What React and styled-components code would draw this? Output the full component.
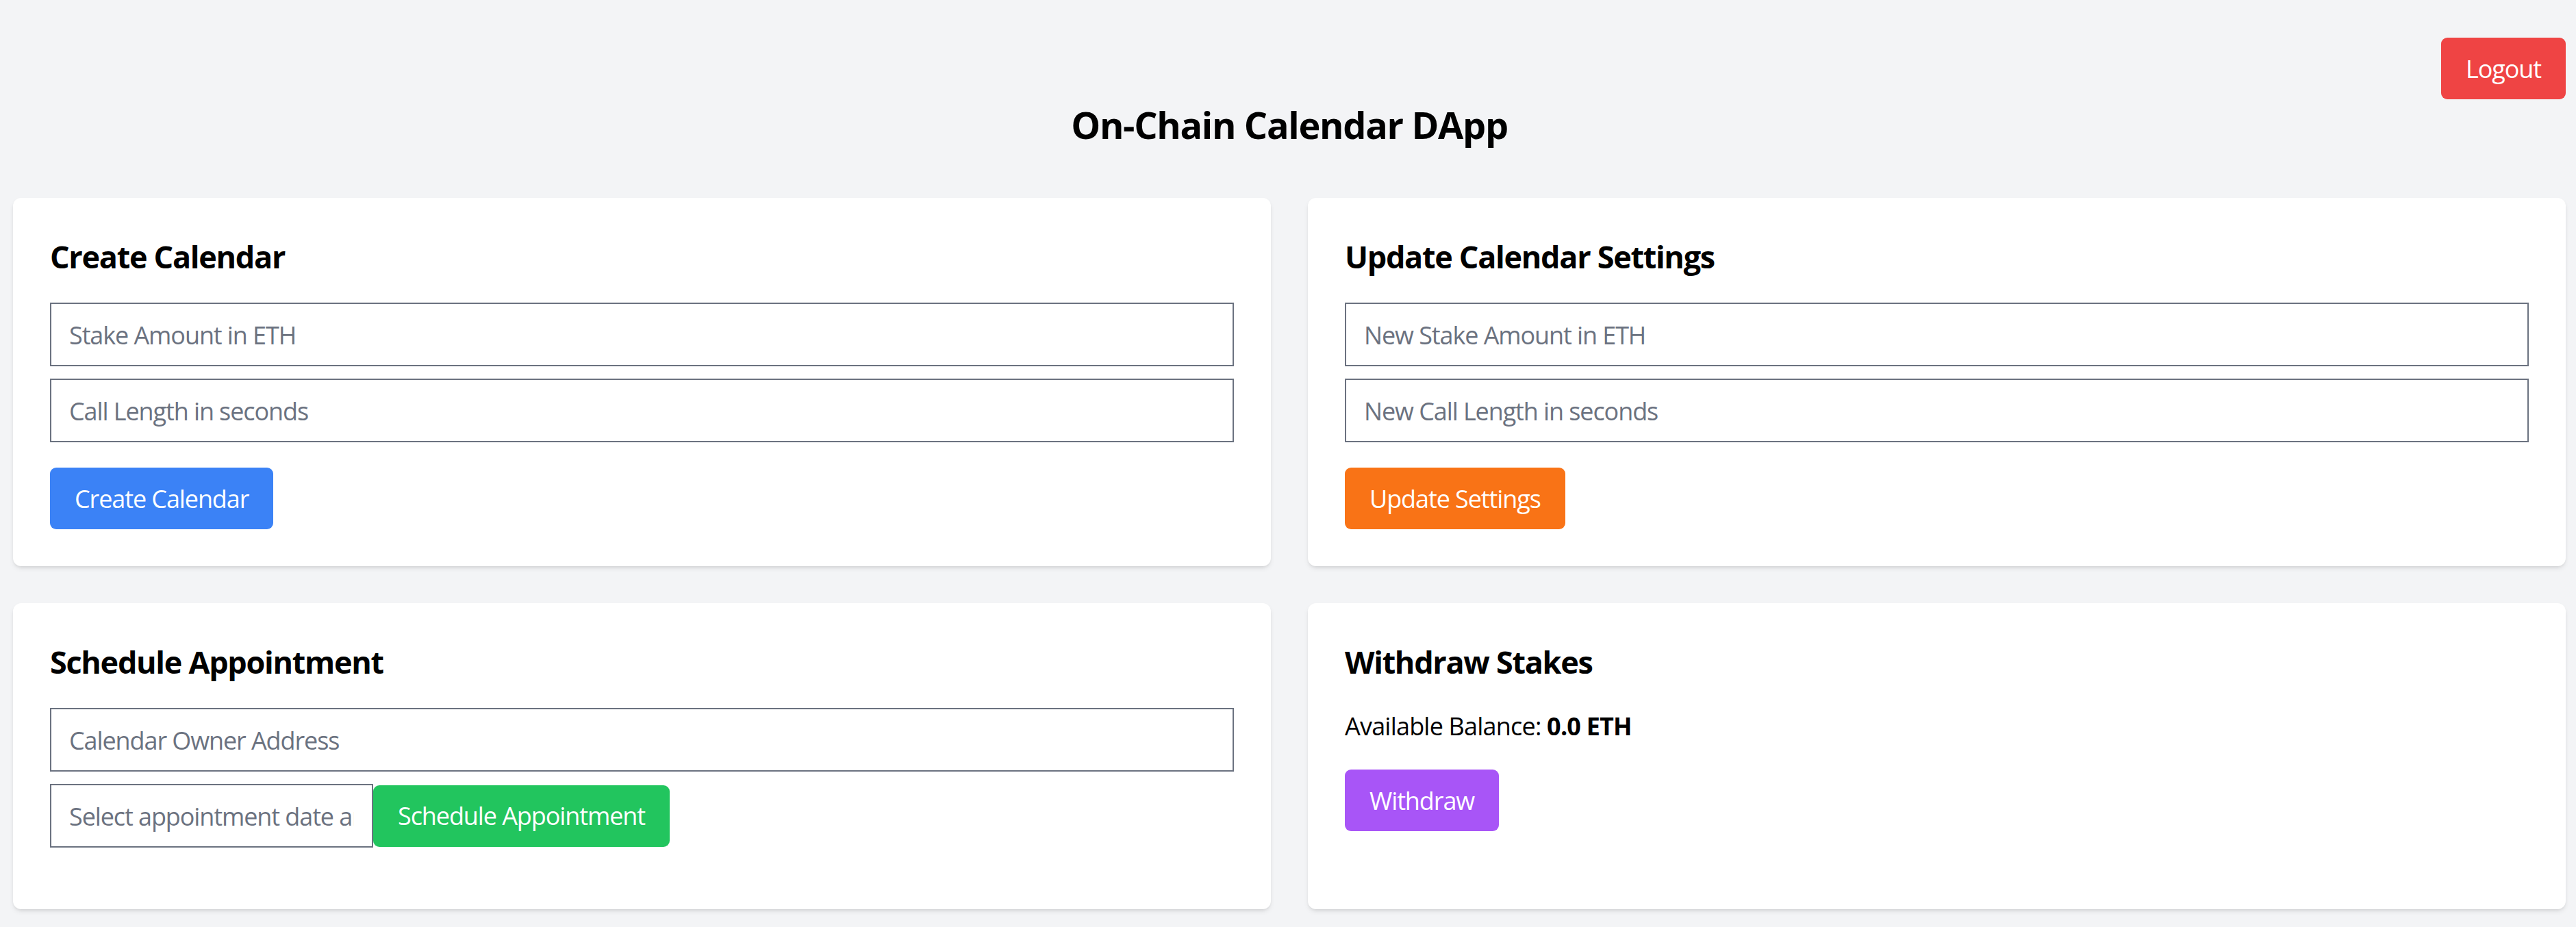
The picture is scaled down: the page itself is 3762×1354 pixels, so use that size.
import React, { useState } from "react";
import styled, { createGlobalStyle } from "styled-components";

const GlobalStyle = createGlobalStyle`
  * { box-sizing: border-box; }
  html, body {
    margin: 0;
    padding: 0;
    background: #f3f4f6;
  }
  body {
    font-family: "Open Sans", "Noto Sans", "Liberation Sans", sans-serif;
    font-size: 36px;
    line-height: 54px;
    color: #000;
  }
`;

const Page = styled.div`
  min-height: 1354px;
  padding: 55px 15px 40px 19px;
  background: #f3f4f6;
`;

const TopBar = styled.div`
  display: flex;
  justify-content: flex-end;
`;

const Title = styled.h1`
  margin: 1px 0 71px;
  text-align: center;
  font-size: 54px;
  line-height: 72px;
  font-weight: 700;
  letter-spacing: -1.3px;
`;

const Grid = styled.div`
  display: grid;
  grid-template-columns: 1fr 1fr;
  gap: 54px;
`;

const Card = styled.section`
  background: #fff;
  border-radius: 12px;
  padding: 54px;
  box-shadow: 0 4px 7px -1px rgba(0, 0, 0, 0.1), 0 2px 4px -2px rgba(0, 0, 0, 0.1);
`;

const CardTitle = styled.h2`
  margin: 0 0 36px;
  font-size: 45px;
  line-height: 63px;
  font-weight: 700;
  letter-spacing: -1.3px;
`;

const Input = styled.input`
  display: block;
  width: ${(p) => p.$width || "100%"};
  height: 93px;
  margin-bottom: ${(p) => (p.$last ? "0" : "18px")};
  padding: 2px 26px 0;
  border: 2px solid #6b7280;
  border-radius: 0;
  background: #fff;
  font-family: inherit;
  font-size: 36px;
  letter-spacing: -1.1px;
  color: #111827;
  outline: none;

  &::placeholder {
    color: #6b7280;
  }
`;

const Button = styled.button`
  height: 90px;
  margin-top: ${(p) => p.$mt || "0"};
  padding: 0 36px;
  border: none;
  border-radius: 9px;
  background: ${(p) => p.$bg};
  color: #fff;
  font-family: inherit;
  font-size: 36px;
  letter-spacing: -1.1px;
  cursor: pointer;
`;

const InlineRow = styled.div`
  display: flex;
  align-items: center;
  margin-bottom: 36px;
`;

const Balance = styled.p`
  margin: 0;
  font-size: 36px;
  line-height: 54px;
  letter-spacing: -0.8px;

  strong {
    font-weight: 700;
  }
`;

export default function App() {
  const [stake, setStake] = useState("");
  const [callLength, setCallLength] = useState("");
  const [newStake, setNewStake] = useState("");
  const [newCallLength, setNewCallLength] = useState("");
  const [owner, setOwner] = useState("");
  const [date, setDate] = useState("");

  return (
    <>
      <GlobalStyle />
      <Page>
        <TopBar>
          <Button $bg="#ef4444">Logout</Button>
        </TopBar>
        <Title>On-Chain Calendar DApp</Title>

        <Grid>
          <Card>
            <CardTitle>Create Calendar</CardTitle>
            <Input
              placeholder="Stake Amount in ETH"
              value={stake}
              onChange={(e) => setStake(e.target.value)}
            />
            <Input
              $last
              placeholder="Call Length in seconds"
              value={callLength}
              onChange={(e) => setCallLength(e.target.value)}
            />
            <Button $bg="#3b82f6" $mt="37px">
              Create Calendar
            </Button>
          </Card>

          <Card>
            <CardTitle>Update Calendar Settings</CardTitle>
            <Input
              placeholder="New Stake Amount in ETH"
              value={newStake}
              onChange={(e) => setNewStake(e.target.value)}
            />
            <Input
              $last
              placeholder="New Call Length in seconds"
              value={newCallLength}
              onChange={(e) => setNewCallLength(e.target.value)}
            />
            <Button $bg="#f97316" $mt="37px">
              Update Settings
            </Button>
          </Card>

          <Card>
            <CardTitle>Schedule Appointment</CardTitle>
            <Input
              placeholder="Calendar Owner Address"
              value={owner}
              onChange={(e) => setOwner(e.target.value)}
            />
            <InlineRow>
              <Input
                $last
                $width="472px"
                placeholder="Select appointment date and time"
                value={date}
                onChange={(e) => setDate(e.target.value)}
              />
              <Button $bg="#22c55e">Schedule Appointment</Button>
            </InlineRow>
          </Card>

          <Card>
            <CardTitle>Withdraw Stakes</CardTitle>
            <Balance>
              Available Balance: <strong>0.0 ETH</strong>
            </Balance>
            <Button $bg="#a855f7" $mt="36px">
              Withdraw
            </Button>
          </Card>
        </Grid>
      </Page>
    </>
  );
}
